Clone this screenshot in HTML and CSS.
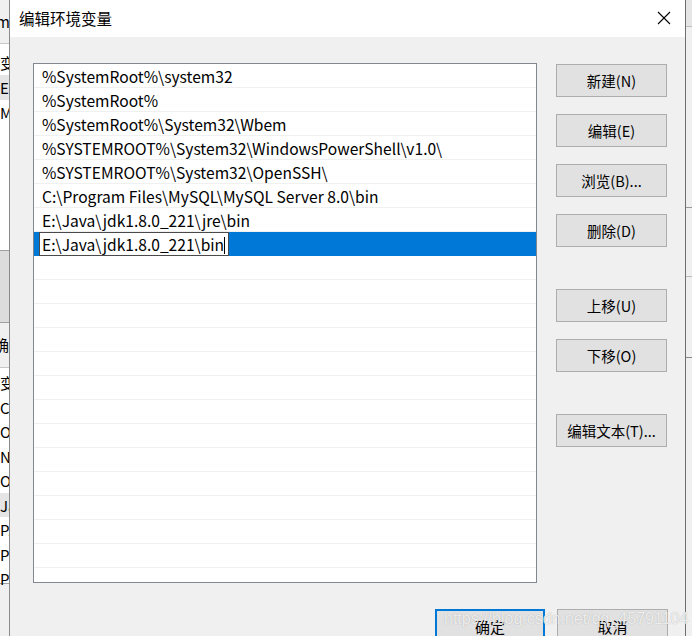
FILE: index.html
```html
<!DOCTYPE html>
<html lang="zh-CN">
<head>
    <meta charset="UTF-8">
    <title>编辑环境变量</title>
    <link rel="stylesheet" href="styles.css">
</head>
<body>
    <div class="desktop">
        <div class="back-left">
            <div class="bl-top">m</div>
            <div class="bl-list">
                <div>变</div>
                <div class="bl-sel">E</div>
                <div>M</div>
            </div>
            <div class="bl-gap"></div>
            <div class="bl-btn">确</div>
            <div class="bl-list bl-list2">
                <div>变</div>
                <div>Co</div>
                <div>Or</div>
                <div>NU</div>
                <div>OS</div>
                <div class="bl-sel">Ja</div>
                <div>PA</div>
                <div>PR</div>
                <div>P</div>
            </div>
        </div>

        <div class="dialog">
            <div class="titlebar">
                <span class="title">编辑环境变量</span>
                <svg class="close" width="14" height="14" viewBox="0 0 14 14">
                    <path d="M1 1 L13 13 M13 1 L1 13" stroke="#000" stroke-width="1.1" fill="none"/>
                </svg>
            </div>
            <div class="body">
                <div class="list">
                    <div class="row">%SystemRoot%\system32</div>
                    <div class="row">%SystemRoot%</div>
                    <div class="row">%SystemRoot%\System32\Wbem</div>
                    <div class="row">%SYSTEMROOT%\System32\WindowsPowerShell\v1.0\</div>
                    <div class="row">%SYSTEMROOT%\System32\OpenSSH\</div>
                    <div class="row">C:\Program Files\MySQL\MySQL Server 8.0\bin</div>
                    <div class="row">E:\Java\jdk1.8.0_221\jre\bin</div>
                    <div class="row selected">
                        <span class="edit">E:\Java\jdk1.8.0_221\bin<span class="caret"></span></span>
                    </div>
                    <div class="row"></div>
                    <div class="row"></div>
                    <div class="row"></div>
                    <div class="row"></div>
                    <div class="row"></div>
                    <div class="row"></div>
                    <div class="row"></div>
                    <div class="row"></div>
                    <div class="row"></div>
                    <div class="row"></div>
                    <div class="row"></div>
                    <div class="row"></div>
                    <div class="row"></div>
                    <div class="row"></div>
                </div>
                <div class="side">
                    <button class="btn">新建(N)</button>
                    <button class="btn">编辑(E)</button>
                    <button class="btn">浏览(B)...</button>
                    <button class="btn">删除(D)</button>
                    <button class="btn move">上移(U)</button>
                    <button class="btn">下移(O)</button>
                    <button class="btn text-edit">编辑文本(T)...</button>
                </div>
            </div>
            <div class="footer">
                <button class="btn default">确定</button>
                <button class="btn">取消</button>
            </div>
            <div class="watermark">https://blog.csdn.net/qq_45791104</div>
        </div>

        <div class="back-right">
            <div class="br-a"></div>
            <div class="br-b"></div>
            <div class="br-c"></div>
            <div class="br-d"></div>
            <div class="br-e"></div>
        </div>
    </div>
</body>
</html>
```

FILE: styles.css
```css
html, body {
    margin: 0;
    padding: 0;
}
body {
    width: 692px;
    height: 636px;
    overflow: hidden;
    font-family: "Noto Sans CJK SC", "Noto Sans", sans-serif;
    background: #f0f0f0;
}
.desktop {
    display: flex;
    height: 636px;
    overflow: hidden;
}

/* windows behind the dialog */
.back-left {
    width: 9px;
    flex-shrink: 0;
    overflow: hidden;
    background: #f0f0f0;
    font-size: 15px;
    color: #000;
    white-space: nowrap;
    display: flex;
    flex-direction: column;
}
.bl-top {
    height: 43px;
    flex-shrink: 0;
    line-height: 43px;
    text-indent: -4px;
    border-bottom: 1px solid #c8c8c8;
}
.bl-list {
    background: #fff;
    padding-top: 6px;
    height: 200px;
    flex-shrink: 0;
    border-bottom: 1px solid #a0a0a0;
}
.bl-list div {
    height: 25px;
    line-height: 25px;
}
.bl-sel {
    background: #e5e5e5;
}
.bl-gap {
    height: 71px;
    flex-shrink: 0;
    background: #dcdcdc;
    border-bottom: 1px solid #a0a0a0;
}
.bl-btn {
    height: 44px;
    flex-shrink: 0;
    line-height: 44px;
    text-indent: -6px;
    border-bottom: 1px solid #c8c8c8;
}
.bl-list2 {
    height: 213px;
    padding-top: 2px;
    line-height: 24px;
}
.bl-list2 div {
    height: 24.5px;
}

.back-right {
    width: 6px;
    flex-shrink: 0;
    display: flex;
    flex-direction: column;
    background: #f0f0f0;
}
.br-a { height: 26px; flex-shrink: 0; background: #e6e6e6; border-bottom: 1px solid #bbb; }
.br-b { height: 180px; flex-shrink: 0; border-bottom: 1px solid #999; }
.br-c { height: 68px; flex-shrink: 0; border-bottom: 1px solid #bbb; }
.br-d { height: 80px; flex-shrink: 0; border-bottom: 1px solid #888; }
.br-e { flex: 1; }

/* dialog */
.dialog {
    position: relative;
    width: 675px;
    flex-shrink: 0;
    border-left: 1px solid #8a8a8a;
    border-right: 1px solid #6e6e6e;
    background: #f0f0f0;
    display: flex;
    flex-direction: column;
}
.titlebar {
    height: 37px;
    flex-shrink: 0;
    background: #fff;
    display: flex;
    align-items: center;
    justify-content: space-between;
    padding: 0 14px 0 9px;
}
.title {
    font-size: 15.5px;
    color: #000;
    padding-bottom: 1px;
}
.close {
    margin-bottom: 1px;
}
.body {
    display: flex;
    flex-shrink: 0;
    padding: 26px 0 0 23px;
    gap: 19px;
}
.list {
    width: 502px;
    height: 518px;
    border: 1px solid #828790;
    background: #fff;
    overflow: hidden;
}
.row {
    height: 23px;
    line-height: 24px;
    border-bottom: 1px solid #f0f0f0;
    padding-left: 8px;
    font-size: 15.6px;
    color: #000;
    white-space: nowrap;
}
.row.selected {
    background: #0078d7;
    padding-left: 5px;
    border-bottom-color: #0078d7;
}
.edit {
    display: inline-block;
    height: 22px;
    line-height: 23px;
    width: 186px;
    padding-left: 2px;
    border: 1px solid #4a4a4a;
    background: #fff;
    vertical-align: top;
}
.caret {
    display: inline-block;
    width: 1px;
    height: 17px;
    background: #000;
    vertical-align: -3px;
}
.side {
    display: flex;
    flex-direction: column;
    padding-top: 1px;
}
.btn {
    width: 111px;
    height: 33px;
    margin: 0 0 17px 0;
    border: 1px solid #adadad;
    background: #e1e1e1;
    font-family: "Noto Sans CJK SC", "Noto Sans", sans-serif;
    font-size: 14.5px;
    color: #000;
    padding: 0;
}
.btn.move {
    margin-top: 25px;
}
.btn.text-edit {
    margin-top: 25px;
}
.footer {
    display: flex;
    flex-shrink: 0;
    justify-content: flex-end;
    gap: 12px;
    padding: 26px 17px 0 0;
}
.footer .btn {
    margin: 0;
    font-size: 15px;
    padding-top: 2px;
    flex-shrink: 0;
}
.btn.default {
    width: 110px;
    border: 2px solid #0078d7;
}
.watermark {
    position: absolute;
    left: 434px;
    top: 610px;
    font-family: "Liberation Sans", Arial, sans-serif;
    font-size: 16px;
    color: rgba(255, 255, 255, 0.8);
    text-shadow: 0 0 1px rgba(120, 120, 120, 0.6);
    white-space: nowrap;
}
```
